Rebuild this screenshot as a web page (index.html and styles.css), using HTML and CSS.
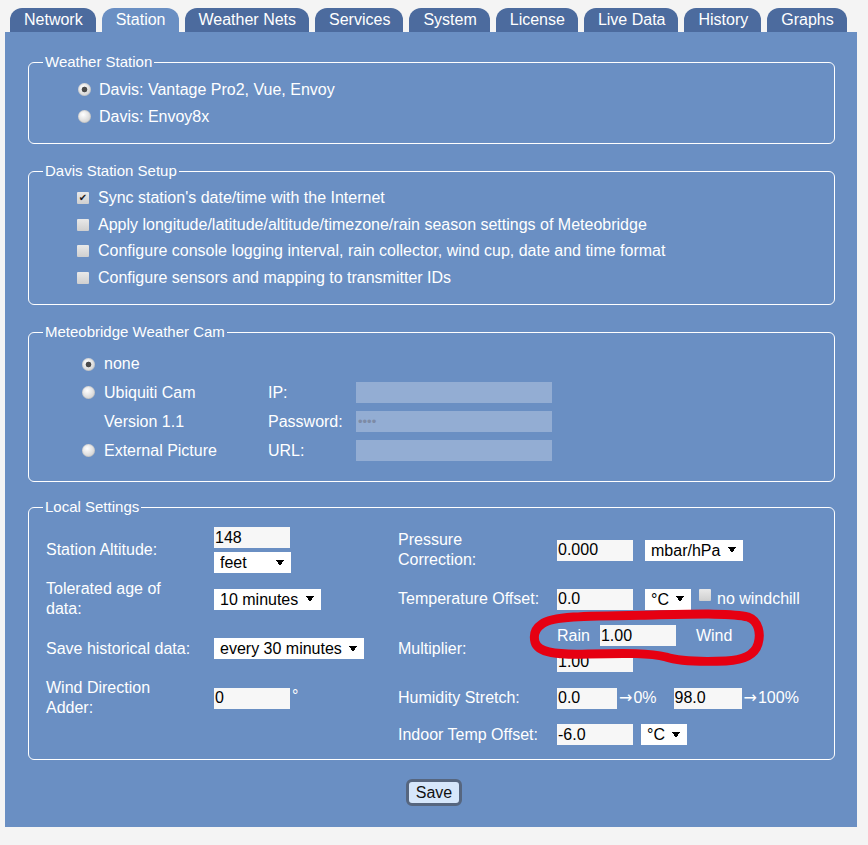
FILE: index.html
```html
<!DOCTYPE html>
<html lang="en">
<head>
    <meta charset="UTF-8">
    <title>Meteobridge - Station</title>
    <link rel="stylesheet" href="styles.css">
</head>
<body>

<div class="page">
    <ul class="tabs">
        <li><a href="#">Network</a></li>
        <li class="active"><a href="#">Station</a></li>
        <li><a href="#">Weather Nets</a></li>
        <li><a href="#">Services</a></li>
        <li><a href="#">System</a></li>
        <li><a href="#">License</a></li>
        <li><a href="#">Live Data</a></li>
        <li><a href="#">History</a></li>
        <li><a href="#">Graphs</a></li>
    </ul>

    <form class="panel">
        <fieldset>
            <legend>Weather Station</legend>
            <label class="opt"><input type="radio" name="station" checked> Davis: Vantage Pro2, Vue, Envoy</label>
            <label class="opt"><input type="radio" name="station"> Davis: Envoy8x</label>
        </fieldset>

        <fieldset>
            <legend>Davis Station Setup</legend>
            <label class="chk"><input type="checkbox" checked> Sync station's date/time with the Internet</label>
            <label class="chk"><input type="checkbox"> Apply longitude/latitude/altitude/timezone/rain season settings of Meteobridge</label>
            <label class="chk"><input type="checkbox"> Configure console logging interval, rain collector, wind cup, date and time format</label>
            <label class="chk"><input type="checkbox"> Configure sensors and mapping to transmitter IDs</label>
        </fieldset>

        <fieldset class="cam-set">
            <legend>Meteobridge Weather Cam</legend>
            <table class="cam">
                <colgroup><col class="cam-c1"><col class="cam-c2"><col class="cam-c3"></colgroup>
                <tr>
                    <td colspan="3"><label class="opt"><input type="radio" name="cam" checked> none</label></td>
                </tr>
                <tr>
                    <td><label class="opt"><input type="radio" name="cam"> Ubiquiti Cam</label></td>
                    <td>IP:</td>
                    <td><input class="cam-in" type="text"></td>
                </tr>
                <tr>
                    <td class="indent">Version 1.1</td>
                    <td>Password:</td>
                    <td><input class="cam-in pw" type="password" value="1234"></td>
                </tr>
                <tr>
                    <td><label class="opt"><input type="radio" name="cam"> External Picture</label></td>
                    <td>URL:</td>
                    <td><input class="cam-in" type="text"></td>
                </tr>
            </table>
        </fieldset>

        <fieldset class="local">
            <legend>Local Settings</legend>
            <table class="settings">
                <colgroup><col class="c1"><col class="c2"><col class="c3"><col class="c4"></colgroup>
                <tr>
                    <td>Station Altitude:</td>
                    <td>
                        <div class="stack">
                            <input class="num" type="text" value="148">
                            <select class="sel"><option>feet</option><option>meters</option></select>
                        </div>
                    </td>
                    <td>Pressure<br>Correction:</td>
                    <td>
                        <div class="field">
                            <input class="num" type="text" value="0.000">
                            <select class="sel ml12"><option>mbar/hPa</option><option>inHg</option></select>
                        </div>
                    </td>
                </tr>
                <tr>
                    <td>Tolerated age of<br>data:</td>
                    <td>
                        <div class="field">
                            <select class="sel"><option>10 minutes</option><option>5 minutes</option><option>30 minutes</option></select>
                        </div>
                    </td>
                    <td>Temperature Offset:</td>
                    <td>
                        <div class="field">
                            <input class="num" type="text" value="0.0">
                            <select class="sel ml12"><option>°C</option><option>°F</option></select>
                            <label class="nowc"><input type="checkbox"> no windchill</label>
                        </div>
                    </td>
                </tr>
                <tr>
                    <td>Save historical data:</td>
                    <td>
                        <div class="field">
                            <select class="sel"><option>every 30 minutes</option><option>every 5 minutes</option><option>every hour</option></select>
                        </div>
                    </td>
                    <td>Multiplier:</td>
                    <td>
                        <div class="field">
                            <span>Rain</span>
                            <input class="num ml10" type="text" value="1.00">
                            <span class="ml20">Wind</span>
                        </div>
                        <div class="field next">
                            <input class="num" type="text" value="1.00">
                        </div>
                    </td>
                </tr>
                <tr>
                    <td>Wind Direction<br>Adder:</td>
                    <td>
                        <div class="field">
                            <input class="num" type="text" value="0">
                            <span class="deg">°</span>
                        </div>
                    </td>
                    <td>Humidity Stretch:</td>
                    <td>
                        <div class="field">
                            <input class="num short" type="text" value="0.0">
                            <span class="ml2"><span class="arr">→</span>0%</span>
                            <input class="num mid ml17" type="text" value="98.0">
                            <span class="ml2"><span class="arr">→</span>100%</span>
                        </div>
                    </td>
                </tr>
                <tr>
                    <td></td>
                    <td></td>
                    <td>Indoor Temp Offset:</td>
                    <td>
                        <div class="field">
                            <input class="num" type="text" value="-6.0">
                            <select class="sel ml8"><option>°C</option><option>°F</option></select>
                        </div>
                    </td>
                </tr>
            </table>
        </fieldset>

        <div class="actions">
            <button type="button" class="save">Save</button>
        </div>
    </form>

    <!-- red marker someone drew around the multiplier fields -->
    <svg class="marker" width="240" height="64" viewBox="0 0 240 64">
        <path d="M 14 18 C 24 10, 60 10, 125 9 C 170 8, 205 7, 220 11 C 231 15, 233 28, 230 38 C 227 48, 218 54, 198 55 C 172 56, 150 55, 138 51 C 122 47, 100 47, 60 48 C 30 49, 10 47, 7 36 C 5 28, 8 22, 14 18 Z"
              fill="none" stroke="#e60012" stroke-width="9" stroke-linejoin="round"/>
    </svg>
</div>

</body>
</html>
```

FILE: styles.css
```css
body {
    margin: 0;
    background-color: #f4f4f4;
    font-family: "Liberation Sans", Arial, sans-serif;
    font-size: 16px;
    color: #fff;
}
.page {
    position: relative;
    padding: 8px 0 0 5px;
}
.tabs {
    list-style: none;
    margin: 0 0 0 5px;
    padding: 0;
    display: flex;
    gap: 6px;
}
.tabs a {
    display: block;
    height: 24px;
    line-height: 24px;
    padding: 0 13px 0 14px;
    background-color: #4c6b9e;
    color: white;
    text-decoration: none;
    border-radius: 12px 12px 0 0;
}
.tabs .active a {
    background-color: #6a8fc3;
}
.panel {
    width: 852px;
    box-sizing: border-box;
    background-color: #6a8fc3;
    padding: 21px 22px 21px 23px;
}
fieldset {
    margin: 0 0 18px;
    border: 1px solid #fff;
    border-radius: 6px;
    padding: 5px 20px 13px 14px;
}
legend {
    font-size: 15px;
    line-height: 18px;
    padding: 0 2px;
}
.opt {
    display: flex;
    align-items: center;
    gap: 8px;
    height: 27px;
    padding-left: 35px;
}
.chk {
    display: flex;
    align-items: center;
    gap: 9px;
    height: 26.5px;
    padding-left: 34px;
}
input[type="radio"] {
    appearance: none;
    -webkit-appearance: none;
    width: 13px;
    height: 13px;
    margin: 0;
    flex: none;
    border-radius: 50%;
    background: radial-gradient(circle at 40% 35%, #fff 0, #e4e4e4 45%, #c4c4c4 100%);
    box-shadow: inset 0 0 0 1px rgba(0, 0, 0, 0.08);
}
input[type="radio"]:checked {
    background: radial-gradient(circle, #4b4b4b 0, #4b4b4b 2.5px, transparent 3.2px),
                radial-gradient(circle at 40% 35%, #fff 0, #e4e4e4 45%, #c4c4c4 100%);
}
input[type="checkbox"] {
    appearance: none;
    -webkit-appearance: none;
    width: 12px;
    height: 12px;
    margin: 0;
    flex: none;
    border-radius: 1px;
    background: linear-gradient(#e9e9e9, #cfcfcf);
    display: flex;
    align-items: center;
    justify-content: center;
}
input[type="checkbox"]:checked::after {
    content: "\2714";
    font-family: "DejaVu Sans", sans-serif;
    font-size: 10px;
    line-height: 12px;
    color: #1a1a1a;
}

/* weather cam */
.cam-set {
    padding-top: 9px;
    padding-bottom: 16px;
    margin-bottom: 16px;
}
.cam {
    border-collapse: collapse;
    table-layout: fixed;
    margin-left: 39px;
}
.cam td {
    padding: 4px 0;
    line-height: 20px;
    vertical-align: middle;
}
.cam-c1 { width: 186px; }
.cam-c2 { width: 88px; }
.cam-c3 { width: 196px; }
.cam .opt {
    height: 20px;
    padding-left: 0;
    gap: 9px;
}
.cam .indent {
    padding-left: 22px;
}
.cam-in {
    display: block;
    width: 196px;
    height: 21px;
    box-sizing: border-box;
    border: 0;
    padding: 0 2px;
    background-color: #93add3;
    font-family: "Liberation Sans", Arial, sans-serif;
    font-size: 16px;
    color: #000;
}
.cam-in.pw {
    font-size: 13px;
    color: #7d8ba6;
}

/* local settings */
.local {
    padding-top: 8px;
    padding-bottom: 11px;
    margin-bottom: 0;
}
.settings {
    border-collapse: collapse;
    table-layout: fixed;
    margin-left: 3px;
}
.settings td {
    padding: 3px 0;
    line-height: 20px;
    vertical-align: middle;
}
.c1 { width: 168px; }
.c2 { width: 184px; }
.c3 { width: 159px; }
.c4 { width: 257px; }
.field {
    display: flex;
    align-items: center;
}
.field.next {
    margin-top: 5px;
}
.stack {
    display: flex;
    flex-direction: column;
    align-items: flex-start;
    gap: 4px;
}
.num {
    width: 76px;
    height: 21px;
    box-sizing: border-box;
    border: 0;
    padding: 0 1px;
    background-color: #f7f7f7;
    font-family: "Liberation Sans", Arial, sans-serif;
    font-size: 16px;
    color: #000;
}
.num.short { width: 60px; }
.num.mid { width: 68px; }
.sel {
    appearance: none;
    -webkit-appearance: none;
    height: 21px;
    border: 0;
    border-radius: 0;
    padding: 0 22px 0 6px;
    background-color: #fff;
    background-image: linear-gradient(to top right, transparent 50%, #000 50%),
                      linear-gradient(to top left, transparent 50%, #000 50%);
    background-size: 4px 6px, 4px 6px;
    background-repeat: no-repeat;
    background-position: right 11px center, right 7px center;
    font-family: "Liberation Sans", Arial, sans-serif;
    font-size: 16px;
    color: #000;
}
.arr {
    font-family: "DejaVu Sans", sans-serif;
    font-size: 16px;
    margin-right: 1px;
}
.nowc {
    display: flex;
    align-items: center;
    gap: 6px;
    margin-left: 8px;
}
.nowc input {
    align-self: flex-start;
    margin-top: 0;
}
.deg {
    margin-left: 2px;
    align-self: flex-start;
    line-height: 16px;
}
.ml2 { margin-left: 2px; }
.ml8 { margin-left: 8px; }
.ml10 { margin-left: 10px; }
.ml12 { margin-left: 12px; }
.ml17 { margin-left: 17px; }
.ml20 { margin-left: 20px; }

.actions {
    text-align: center;
    margin-top: 19px;
}
.save {
    height: 27px;
    margin-left: 5px;
    padding: 0 7px;
    background-color: #d6e7fb;
    border: 3px solid #56667f;
    border-radius: 6px;
    font-family: "Liberation Sans", Arial, sans-serif;
    font-size: 16px;
    color: #111;
    cursor: pointer;
}
.marker {
    position: absolute;
    left: 528px;
    top: 606px;
    pointer-events: none;
}
```
